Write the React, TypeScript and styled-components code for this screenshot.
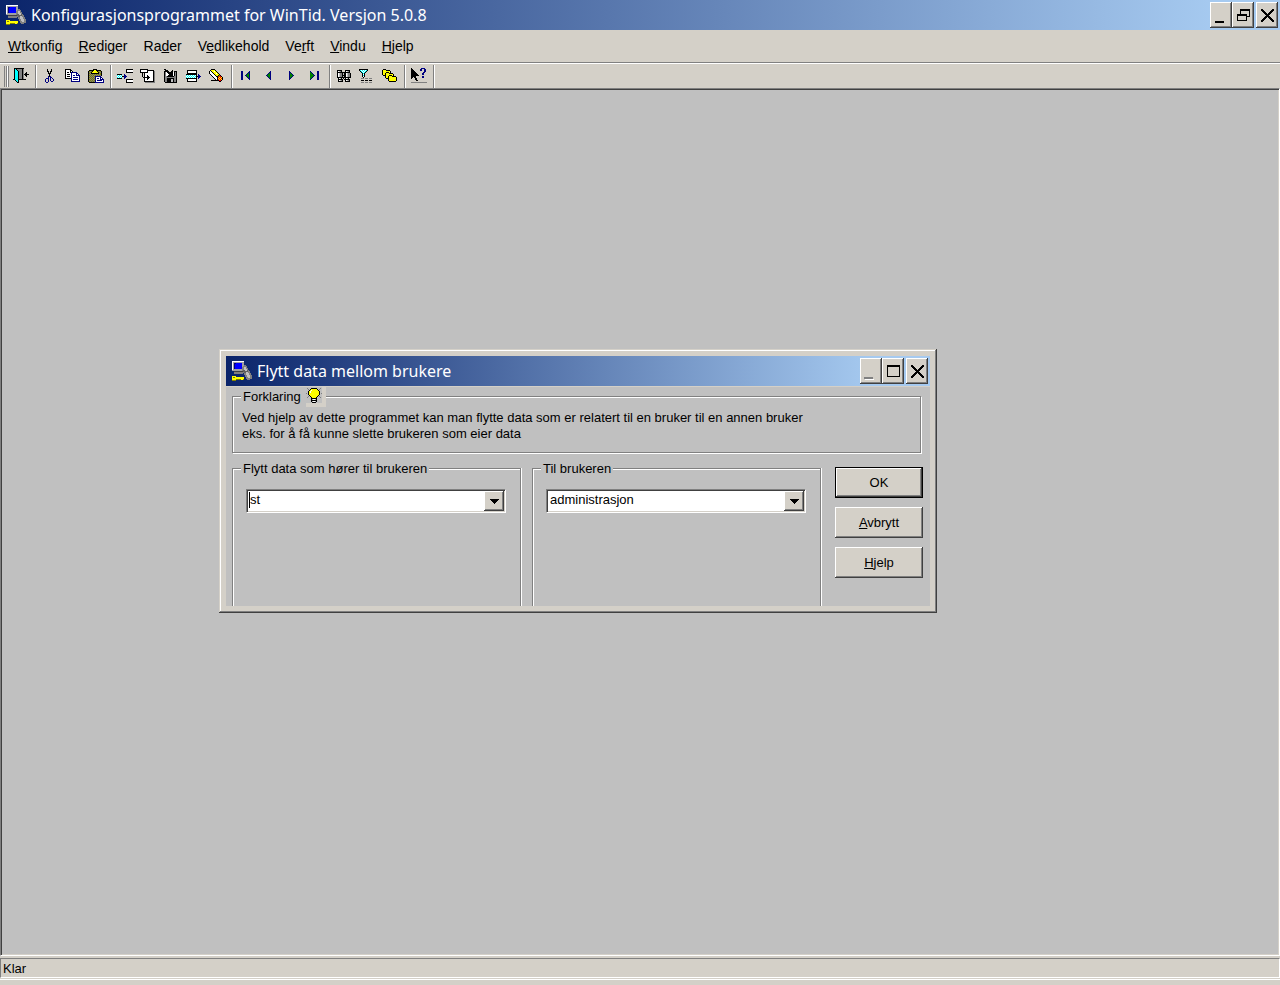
import React from "react";
import styled, { createGlobalStyle, css } from "styled-components";

const face = "#d4d0c8";
const canvas = "#c0c0c0";

const GlobalStyle = createGlobalStyle`
  * { box-sizing: border-box; }
  body { margin: 0; }
  body, button, select {
    font-family: "Liberation Sans", Arial, sans-serif;
    font-size: 13px;
    line-height: 16px;
    color: #000;
  }
`;

const raised = css`
  box-shadow: inset -1px -1px #404040, inset 1px 1px #fff, inset -2px -2px #808080;
`;

const Frame = styled.div`
  display: flex;
  flex-direction: column;
  min-height: 100vh;
  background: ${face};
`;

const TitleBar = styled.header<{ $inner?: boolean }>`
  display: flex;
  align-items: center;
  height: 30px;
  padding: 0 2px 0 6px;
  background: linear-gradient(to right, #0a246a, #a6caf0 ${(p) => (p.$inner ? "92%" : "95%")});
`;

const TitleText = styled.h1`
  flex: 1;
  margin: 0 0 0 5px;
  font-family: "Noto Sans", Tahoma, sans-serif;
  font-size: 16px;
  line-height: 20px;
  font-weight: 400;
  color: #fff;
  white-space: nowrap;
`;

const WindowButtons = styled.div`
  display: flex;
`;

const WindowButton = styled.button<{ $apart?: boolean }>`
  display: flex;
  align-items: center;
  justify-content: center;
  width: 22px;
  height: 26px;
  margin-left: ${(p) => (p.$apart ? "2px" : "0")};
  padding: 0;
  border: 0;
  background: ${face};
  ${raised}
`;

const MinimizeMark = styled.span`
  display: flex;
  padding: 14px 4px 0 0;
`;

const MenuBar = styled.nav`
  display: flex;
  gap: 16px;
  height: 33px;
  padding: 0 8px;
  border-bottom: 1px solid #808080;
`;

const MenuItem = styled.button`
  padding: 0;
  border: 0;
  background: none;
  font-size: 14px;
`;

const Toolbar = styled.div`
  display: flex;
  height: 25px;
  border-top: 1px solid #fff;
`;

const Grip = styled.div`
  width: 5px;
  margin: 2px 0 1px 4px;
  border: solid;
  border-width: 0 1px;
  border-color: #fff #808080;
  background: linear-gradient(to right, ${face} 1px, #808080 1px, #808080 2px, #fff 2px);
`;

const ToolButton = styled.button`
  display: flex;
  align-items: center;
  justify-content: center;
  width: 23px;
  height: 23px;
  padding: 0;
  border: 0;
  background: none;
`;

const Separator = styled.div`
  width: 2px;
  margin: 1px 1px 0 3px;
  border-left: 1px solid #808080;
  border-right: 1px solid #fff;
`;

const Workspace = styled.main`
  position: relative;
  flex: 1;
  background: ${canvas};
  border: 1px solid;
  border-color: #808080 #fff #fff #808080;
  box-shadow: inset 1px 1px #404040, inset -1px -1px ${face};
`;

const StatusBar = styled.footer`
  padding: 2px 0 5px;
`;

const StatusText = styled.div`
  height: 20px;
  padding: 2px;
  border: 1px solid;
  border-color: #808080 #fff #fff #808080;
`;

const StatusEdge = styled.div`
  height: 1px;
  margin-top: 1px;
  background: #fff;
`;

const Dialog = styled.section`
  position: absolute;
  left: 218px;
  top: 260px;
  width: 718px;
  padding: 7px;
  background: ${face};
  box-shadow: inset -1px -1px #404040, inset 1px 1px ${face}, inset -2px -2px #808080,
    inset 2px 2px #fff;
`;

const DialogBody = styled.div`
  margin-top: 1px;
  height: 219px;
  padding: 0 7px 0 6px;
  background: ${canvas};
  overflow: hidden;
`;

const Group = styled.fieldset<{ $open?: boolean }>`
  min-width: 0;
  margin: 0;
  padding: 0 8px;
  border: 1px solid #808080;
  ${(p) =>
    p.$open
      ? css`
          width: 289px;
          height: 160px;
          padding: 0 13px;
          box-shadow: 1px 0 #fff, inset 1px 1px #fff;
        `
      : css`
          height: 66px;
          margin-right: 2px;
          box-shadow: 1px 1px #fff, inset 1px 1px #fff;
        `}
`;

const Legend = styled.legend<{ $tall?: boolean }>`
  display: flex;
  align-items: center;
  gap: 4px;
  height: ${(p) => (p.$tall ? "18px" : "16px")};
  margin-left: ${(p) => (p.$tall ? "0" : "-5px")};
  padding: 2px ${(p) => (p.$tall ? "0" : "2px")} 0 2px;
  background: ${canvas};
`;

const BulbBox = styled.span`
  align-self: flex-start;
  display: flex;
  width: 20px;
  height: 20px;
  margin: -2px 0 0 1px;
  background: linear-gradient(${canvas}, ${canvas}) 0 0 / 16px 16px no-repeat ${face};
`;

const Explanation = styled.p`
  margin: 5px 0 0 1px;
`;

const Columns = styled.div`
  display: flex;
  margin-top: 7px;
`;

const GroupPair = styled.div`
  display: flex;
  gap: 11px;
`;

const Actions = styled.div`
  display: flex;
  flex-direction: column;
  gap: 9px;
  margin: 7px 0 0 14px;
`;

const ActionButton = styled.button<{ $default?: boolean }>`
  width: 88px;
  height: 31px;
  padding: 0;
  background: ${face};
  border: ${(p) => (p.$default ? "1px solid #000" : "0")};
  ${raised}
`;

const Combo = styled.div<{ $caret?: boolean }>`
  position: relative;
  width: 260px;
  height: 24px;
  margin-top: 13px;
  ${(p) =>
    p.$caret &&
    css`
      &::before {
        content: "";
        position: absolute;
        left: 3px;
        top: 3px;
        width: 1px;
        height: 16px;
        background: #000;
      }
    `}
`;

const Select = styled.select`
  appearance: none;
  display: block;
  width: 100%;
  height: 100%;
  padding: 0 22px 2px 3px;
  border: 1px solid;
  border-color: #808080 #fff #fff #808080;
  border-radius: 0;
  outline: 0;
  background: #fff;
  box-shadow: inset 1px 1px #404040, inset -1px -1px ${face};
`;

const Arrow = styled.span`
  position: absolute;
  right: 2px;
  top: 2px;
  display: flex;
  align-items: center;
  justify-content: center;
  width: 20px;
  height: 20px;
  background: ${face};
  pointer-events: none;
  ${raised}
`;

const palette: Record<string, string> = {
  k: "#000000",
  w: "#ffffff",
  g: "#808080",
  l: "#c0c0c0",
  c: "#00ffff",
  n: "#000080",
  b: "#0000ff",
  y: "#ffff00",
  o: "#808000",
  e: "#008000",
  r: "#ff0000",
};

/* Draws a bitmap glyph, one character per pixel. */
function Glyph({ rows }: { rows: string[] }) {
  const width = Math.max(...rows.map((r) => r.length));
  return (
    <svg width={width} height={rows.length} shapeRendering="crispEdges" aria-hidden="true">
      {rows.flatMap((row, y) =>
        [...row].map((c, x) =>
          palette[c] ? <rect key={`${x}-${y}`} x={x} y={y} width="1" height="1" fill={palette[c]} /> : null
        )
      )}
    </svg>
  );
}

const glyphs = {
  exit: [
    ".kkkkkkkkkk.....",
    ".kckgggggkg.....",
    ".kcckggggkg.....",
    ".kccckgggkg.....",
    ".kccckgggkg..k..",
    ".kccckgggkg.kk..",
    ".kccckgggkgkkkkk",
    ".kccckgggkg.kk..",
    ".kccckgggkg..k..",
    ".kccckgggkg.....",
    ".kccckgggkg.....",
    "kkccckkkkkkkk...",
    "..kcck..........",
    "...kck..........",
    "....kk..........",
  ],
  cut: [
    "..k...k..",
    "..k...k..",
    "..kk.kk..",
    "...k.k...",
    "...kkk...",
    "....k....",
    "....k....",
    "...nkn...",
    "...n.nn..",
    ".nnn.n.n.",
    "n..n.n..n",
    "n..n.n..n",
    "n..n..nn.",
    ".nn......",
  ],
  copy: [
    "kkkkkk.........",
    "kwwwwkk........",
    "kwwwwkwk.......",
    "kwkkwknnnnnn...",
    "kwwwwwnwwwwnn..",
    "kwkkkwnwwwwnwn.",
    "kwwwwwnwnnwnnnn",
    "kwkkkwnwwwwwwwn",
    "kwwwwwnwnnnnnwn",
    "kkkkkknwwwwwwwn",
    "......nwnnnnnwn",
    "......nwwwwwwwn",
    "......nnnnnnnnn",
  ],
  paste: [
    ".....kkkk.......",
    ".kkkkkyykkkkk...",
    "kogokyyyykogok..",
    "kgokyyyyyykogk..",
    "kogkkkkkkkkgok..",
    "kgogogogogogok..",
    "kogogogogogogk..",
    "kgogogonnnnnn...",
    "kogogognwwwwnn..",
    "kgogogonwnnwnwn.",
    "kogogognwwwwnnnn",
    "kgogogonwnnnnnwn",
    "kogogognwwwwwwwn",
    ".kkkkkknnnnnnnnn",
  ],
  insert: [
    ".........kkkkkkk",
    ".........kwwwwww",
    ".........kwwwwww",
    ".........kkkkkkk",
    "................",
    "kkkkk..n........",
    "cwcwc..nn.......",
    "wcwcwkknnn......",
    "cwcwc..nn.......",
    "kkkkk..n........",
    ".........kkkkkkk",
    ".........kwwwwww",
    ".........kwwwwww",
    ".........kkkkkkk",
  ],
  place: [
    "kkkkkkkk.......",
    "kwwwwwwkkkkkkk.",
    "kwwwwwwkwwwwwkg",
    "kkkkkkkkwwwwwkg",
    "..k.kwwwwwwwwkg",
    "..k.kwwwwwwwwkg",
    "..k.kwwkwwwwwkg",
    "..k.kwwkkwwwwkg",
    "...kkkkkkkwwwkg",
    "....kwwkkwwwwkg",
    "....kwwkwwwwwkg",
    "....kwwwwwwwwkg",
    "....kkkkkkkkkkg",
    ".....gggggggggg",
  ],
  save: [
    "kk...........",
    ".kkk....k....",
    "kkkkk..kk.kkk",
    "kgwkkkkkkwkgk",
    "kgwwkkkkkwkgk",
    "kgwwwkkkkwkgk",
    "kgwwkkkkkwkgk",
    "kggkkkkkkkggk",
    "kgggggggggggk",
    "kggkkkkkkkggk",
    "kggkkkkllkggk",
    "kggkkkkllkggk",
    "kggkkkkllkggk",
    ".kkkkkkkkkkkk",
  ],
  remove: [
    ".kkkkkkkkkk.....",
    ".kwwwwwwwwk.....",
    ".kwwwwwwwwk.....",
    ".kkkkkkkkkk.....",
    "kkkkkkkkkkk.n...",
    "cwcwcwcwcwk.nn..",
    "wcwcwcwcwckknnn.",
    "cwcwcwcwcwk.nn..",
    "kkkkkkkkkkk.n...",
    ".kwwwwwwwwk.....",
    ".kwwwwwwwwk.....",
    ".kkkkkkkkkk.....",
  ],
  erase: [
    "..kkkk..........",
    ".kyyyyk.........",
    "kwkyywyk........",
    "kwwkyyyyk.......",
    "kwwwkyywyk......",
    ".kwwwkyyyyk.....",
    "..kwwwkyykok....",
    "...kwwwkkorrk...",
    "....kwwwkryryk..",
    ".....kwwkyryrk..",
    "......kwkryryk..",
    "..kkkkkkkkrrk...",
    "..........kk....",
  ],
  first: [
    "nn......n",
    "nn.....nn",
    "nn....nen",
    "nn...neen",
    "nn..neeen",
    "nn...neen",
    "nn....nen",
    "nn.....nn",
    "nn......n",
  ],
  prev: ["....n", "...nn", "..nen", ".neen", "neeen", ".neen", "..nen", "...nn", "....n"],
  next: ["n....", "nn...", "nen..", "neen.", "neeen", "neen.", "nen..", "nn...", "n...."],
  last: [
    "n......nn",
    "en.....nn",
    "een....nn",
    "eeen...nn",
    "eeeen..nn",
    "eeen...nn",
    "een....nn",
    "en.....nn",
    "n......nn",
  ],
  find: [
    "kkkkk...kkkkk.",
    "kwlgk...kwlgk.",
    "kkkkkkkkkkkkk.",
    "kwlggklkkwlggk",
    "kwlggklkkwlggk",
    "kwlggkkkkwlggk",
    "kwlggklkkwlggk",
    "kkkkkkkkkkkkkk",
    ".kwlk.k.kwlk..",
    ".kkkkk.kkkkkk.",
    ".kwlgk..kwlgk.",
    ".kkkkk..kkkkk.",
  ],
  filter: [
    "kkkkkkkkk......",
    "kcwcwcwck......",
    ".kcwcwck.......",
    "..kcwck........",
    "...kck.........",
    "...kwk.........",
    "...kck.........",
    "...kwk.........",
    "....k..........",
    "..ggg.ggg.ggg..",
    "...............",
    "..kkk.kkk.kkk..",
    "...............",
    "..ggg.ggg.ggg..",
  ],
  sort: [
    ".kkk...........",
    "kyyykkkk.......",
    "kyyyyyyyk......",
    "kyyykkkyk......",
    "kyykyyykkkk....",
    "kyykyyyyyyyk...",
    ".kkkyyykkkyk...",
    "...kyykyyykkkk.",
    "...kyykyyyyyyyk",
    "....kkkyyyyyyyk",
    "......kyyyyyyyk",
    "......kyyyyyyyk",
    ".......kkkkkkk.",
  ],
  help: [
    "k.........nnnn..",
    "kk.......nn..nn.",
    "kkk......nn..nn.",
    "kkkk.........nn.",
    "kkkkk.......nn..",
    "kkkkkk.....nn...",
    "kkkkkkk....nn...",
    "kkkkkkkk........",
    "kkkkk......nn...",
    "kk.kk......nn...",
    "k...kk..........",
    "....kk..........",
    ".....kk.........",
    "................",
    "gggggggggggggggg",
  ],
  bulb: [
    "................",
    ".g...kkkkkk...g.",
    "..g.kyyyyyyk.g..",
    "...kywyyyyyyk...",
    "..kywyyyyyyyyk..",
    "..kywyyyyyyyyk..",
    "g.kyyyyyyyyyyk.g",
    "..kyyyyyyyyyyk..",
    "...kyyyyyyyyk...",
    "..g.kyyyyyyk.g..",
    ".g...kyyyyk...g.",
    ".....kkkkkk.....",
    ".....klwwlk.....",
    ".....kkkkkk.....",
    ".....klwwlk.....",
    "......kkkk......",
  ],
  minimize: ["kkkkkkkkk", "kkkkkkkkk"],
  minimizeOff: ["ggggggggg.", "ggggggggg.", ".wwwwwwwww"],
  restore: [
    "...kkkkkkkkkk",
    "...kkkkkkkkkk",
    "...k........k",
    "...k........k",
    "...k........k",
    "kkkkkkkkkk..k",
    "kkkkkkkkkk..k",
    "k........kkkk",
    "k........k...",
    "k........k...",
    "k........k...",
    "kkkkkkkkkk...",
  ],
  maximize: [
    "kkkkkkkkkkkkk",
    "kkkkkkkkkkkkk",
    "k...........k",
    "k...........k",
    "k...........k",
    "k...........k",
    "k...........k",
    "k...........k",
    "k...........k",
    "k...........k",
    "k...........k",
    "kkkkkkkkkkkkk",
  ],
  close: [
    "kk.........kk",
    "kkk.......kkk",
    ".kkk.....kkk.",
    "..kkk...kkk..",
    "...kkk.kkk...",
    "....kkkkk....",
    ".....kkk.....",
    "....kkkkk....",
    "...kkk.kkk...",
    "..kkk...kkk..",
    ".kkk.....kkk.",
    "kkk.......kkk",
    "kk.........kk",
  ],
  arrow: ["kkkkkkkkk", ".kkkkkkk.", "..kkkkk..", "...kkk...", "....k...."],
};

function AppIcon() {
  return (
    <svg width="20" height="20" viewBox="0 0 20 20" shapeRendering="crispEdges" aria-hidden="true">
      <path d="M0 0h12v10H0z" fill="#a0a0a4" />
      <path d="M0 0h12v1H1v8H0z" fill="#fff" />
      <path d="M2 2h8v6H2z" fill="#0000ff" />
      <path d="M2 2h2v1H3v5H2z" fill="#000080" />
      <path d="M2 11h9v2H2z" fill="#808080" />
      <path d="M2 10h9v1H2z" fill="#404040" />
      <path d="M12 4h2v1h1v2h1v2h1v1h1v2h1v2h1v4h-2v1h-3v-1h-1v-2h-1v-2h-1v-2h-1v-2h-1V6h1z" fill="#808080" />
      <path d="M12 6h2v2h1v2h1v2h1v2h1v3h-2v-1h-1v-2h-1v-2h-1v-2h-1z" fill="#c0c0c0" />
      <path d="M11 9h2v1h2V9h1v2h-2v1h-2z" fill="#606060" />
      <path d="M0 15h4v1h8v2H4v1H0z" fill="#ffff00" />
      <path d="M1 16h2v1H1zM4 18h8v1H4zM0 19h4v1H0z" fill="#808000" />
      <path d="M9 18h2v1H9z" fill="#ffff00" />
    </svg>
  );
}

const menus: [string, string, string][] = [
  ["", "W", "tkonfig"],
  ["", "R", "ediger"],
  ["Ra", "d", "er"],
  ["V", "e", "dlikehold"],
  ["Ve", "r", "ft"],
  ["", "V", "indu"],
  ["", "H", "jelp"],
];

const tools: [string, keyof typeof glyphs][][] = [
  [["Avslutt", "exit"]],
  [["Klipp ut", "cut"], ["Kopier", "copy"], ["Lim inn", "paste"]],
  [["Sett inn rad", "insert"], ["Legg til rad", "place"], ["Lagre", "save"], ["Slett rad", "remove"], ["Tøm", "erase"]],
  [["Første", "first"], ["Forrige", "prev"], ["Neste", "next"], ["Siste", "last"]],
  [["Søk", "find"], ["Filter", "filter"], ["Sorter", "sort"]],
  [["Hjelp", "help"]],
];

function WindowControls({ middle, disabledMinimize }: { middle: "restore" | "maximize"; disabledMinimize?: boolean }) {
  return (
    <WindowButtons>
      <WindowButton aria-label="Minimer" disabled={disabledMinimize}>
        <MinimizeMark>
          <Glyph rows={disabledMinimize ? glyphs.minimizeOff : glyphs.minimize} />
        </MinimizeMark>
      </WindowButton>
      <WindowButton aria-label="Størrelse">
        <Glyph rows={glyphs[middle]} />
      </WindowButton>
      <WindowButton aria-label="Lukk" $apart>
        <Glyph rows={glyphs.close} />
      </WindowButton>
    </WindowButtons>
  );
}

function UserGroup({ label, value, caret }: { label: string; value: string; caret?: boolean }) {
  return (
    <Group $open>
      <Legend>{label}</Legend>
      <Combo $caret={caret}>
        <Select aria-label={label} defaultValue={value}>
          <option>{value}</option>
        </Select>
        <Arrow>
          <Glyph rows={glyphs.arrow} />
        </Arrow>
      </Combo>
    </Group>
  );
}

export default function App() {
  return (
    <Frame>
      <GlobalStyle />
      <TitleBar>
        <AppIcon />
        <TitleText>Konfigurasjonsprogrammet for WinTid. Versjon 5.0.8</TitleText>
        <WindowControls middle="restore" />
      </TitleBar>
      <MenuBar>
        {menus.map(([before, key, after]) => (
          <MenuItem key={before + key + after}>
            {before}
            <u>{key}</u>
            {after}
          </MenuItem>
        ))}
      </MenuBar>
      <Toolbar role="toolbar">
        <Grip />
        {tools.map((group) => (
          <React.Fragment key={group[0][0]}>
            {group.map(([label, glyph]) => (
              <ToolButton key={label} aria-label={label}>
                <Glyph rows={glyphs[glyph]} />
              </ToolButton>
            ))}
            <Separator />
          </React.Fragment>
        ))}
      </Toolbar>
      <Workspace>
        <Dialog role="dialog" aria-label="Flytt data mellom brukere">
          <TitleBar $inner>
            <AppIcon />
            <TitleText as="h2">Flytt data mellom brukere</TitleText>
            <WindowControls middle="maximize" disabledMinimize />
          </TitleBar>
          <DialogBody>
            <Group>
              <Legend $tall>
                Forklaring
                <BulbBox>
                  <Glyph rows={glyphs.bulb} />
                </BulbBox>
              </Legend>
              <Explanation>
                Ved hjelp av dette programmet kan man flytte data som er relatert til en bruker til en annen bruker
                <br />
                eks. for å få kunne slette brukeren som eier data
              </Explanation>
            </Group>
            <Columns>
              <GroupPair>
                <UserGroup label="Flytt data som hører til brukeren" value="st" caret />
                <UserGroup label="Til brukeren" value="administrasjon" />
              </GroupPair>
              <Actions>
                <ActionButton $default>OK</ActionButton>
                <ActionButton>
                  <u>A</u>vbrytt
                </ActionButton>
                <ActionButton>
                  <u>H</u>jelp
                </ActionButton>
              </Actions>
            </Columns>
          </DialogBody>
        </Dialog>
      </Workspace>
      <StatusBar>
        <StatusText>Klar</StatusText>
        <StatusEdge />
      </StatusBar>
    </Frame>
  );
}
